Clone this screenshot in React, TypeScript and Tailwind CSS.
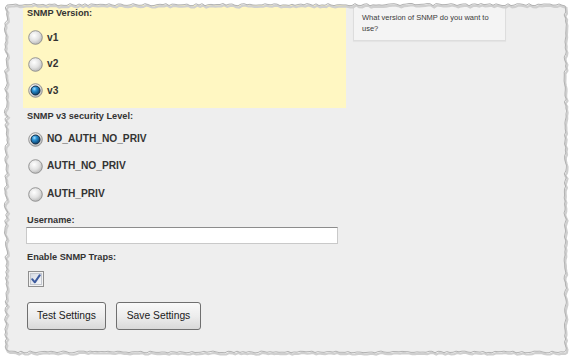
import React from "react";

// deterministic noise for the torn edge
function noise(i: number) {
  const s = Math.sin(i * 12.9898 + 78.233) * 43758.5453;
  return s - Math.floor(s);
}

function tornPath() {
  const pts: string[] = [];
  let k = 1;
  for (let x = 7; x <= 564; x += 3) pts.push(`${x},${(4.6 + (noise(k++) - 0.5) * 2.2).toFixed(1)}`);
  for (let y = 6; y <= 351; y += 3) pts.push(`${(564 + noise(k++) * 2.4).toFixed(1)},${y}`);
  for (let x = 564; x >= 7; x -= 3) pts.push(`${x},${(351 + noise(k++) * 1.8).toFixed(1)}`);
  for (let y = 350; y >= 6; y -= 3) pts.push(`${(6 + (noise(k++) - 0.5) * 3.4).toFixed(1)},${y}`);
  return "M" + pts.join(" L") + " Z";
}

function TornEdge() {
  const d = tornPath();
  return (
    <svg className="pointer-events-none absolute inset-0" width={576} height={364}>
      <path d={`M0 0H576V364H0Z ${d}`} fill="#ffffff" fillRule="evenodd" />
      <path d={d} fill="none" stroke="#cfcfcf" strokeWidth={2.2} transform="translate(1.2 1.8)" />
      <path d={d} fill="none" stroke="#b2b2b2" strokeWidth={1} />
    </svg>
  );
}

function Radio({ checked }: { checked?: boolean }) {
  return (
    <svg width={15} height={15} viewBox="0 0 15 15" className="shrink-0">
      <defs>
        <radialGradient id="radioBg" cx="40%" cy="35%" r="70%">
          <stop offset="0%" stopColor="#ffffff" />
          <stop offset="55%" stopColor="#e2e2e2" />
          <stop offset="100%" stopColor="#b4b4b4" />
        </radialGradient>
        <radialGradient id="radioDot" cx="38%" cy="32%" r="70%">
          <stop offset="0%" stopColor="#a9e2ff" />
          <stop offset="35%" stopColor="#2a93d6" />
          <stop offset="100%" stopColor="#0b3c66" />
        </radialGradient>
      </defs>
      <circle cx={7.5} cy={7.5} r={6.8} fill="url(#radioBg)" stroke="#8c8c8c" strokeWidth={0.9} />
      {checked ? <circle cx={7.5} cy={7.5} r={4.5} fill="url(#radioDot)" stroke="#142c44" strokeWidth={1} /> : null}
    </svg>
  );
}

function RadioRow({ label, checked, h }: { label: string; checked?: boolean; h: string }) {
  return (
    <div className={`flex items-center gap-[4px] pl-[5px] ${h}`}>
      <Radio checked={checked} />
      <span className="text-[10.2px] font-bold leading-none text-[#333]">{label}</span>
    </div>
  );
}

function Checkbox() {
  return (
    <svg width={16} height={16} viewBox="0 0 16 16">
      <defs>
        <linearGradient id="cbBg" x1="0" y1="0" x2="1" y2="1">
          <stop offset="0%" stopColor="#d4d9e2" />
          <stop offset="100%" stopColor="#f7f8fa" />
        </linearGradient>
      </defs>
      <rect x={0.5} y={0.5} width={15} height={15} fill="#f2f2f2" stroke="#8e8e8e" />
      <rect x={2.5} y={2.5} width={11} height={11} fill="url(#cbBg)" stroke="#c3c7cf" />
      <path d="M4.2 8.2 L6.8 11.3 L11.8 4.2" fill="none" stroke="#3c5a9e" strokeWidth={2} strokeLinecap="round" strokeLinejoin="round" />
    </svg>
  );
}

function FormButton({ label, w }: { label: string; w: string }) {
  return (
    <button className={`h-[28px] ${w} rounded-[3px] border border-[#6f6f6f] bg-gradient-to-b from-[#f9f9f9] via-[#ededed] to-[#d9d9d9] text-[10.3px] leading-none text-[#1a1a1a]`}>
      {label}
    </button>
  );
}

function Heading({ children }: { children: React.ReactNode }) {
  return <div className="h-[11px] pl-[4px] text-[9.2px] font-bold leading-[11px] text-[#333]">{children}</div>;
}

export default function App() {
  return (
    <div className="relative h-[364px] w-[576px] overflow-hidden bg-white font-['Liberation_Sans',Arial,sans-serif]">
      <div className="ml-[7px] mt-[5px] flex h-[347px] w-[558px] gap-[7px] bg-[#eeeeee] pl-[16px]">
        <div className="flex w-[323px] flex-col">
          <div className="h-[103px] bg-[#fff7c2] pt-[3px]">
            <Heading>SNMP Version:</Heading>
            <div className="mt-[5.5px]">
              <RadioRow label="v1" h="h-[26.5px]" />
              <RadioRow label="v2" h="h-[26.5px]" />
              <RadioRow label="v3" h="h-[26.5px]" checked />
            </div>
          </div>
          <div className="mt-[3px]">
            <Heading>SNMP v3 security Level:</Heading>
          </div>
          <div className="mt-[3.25px]">
            <RadioRow label="NO_AUTH_NO_PRIV" h="h-[27.5px]" checked />
            <RadioRow label="AUTH_NO_PRIV" h="h-[27.5px]" />
            <RadioRow label="AUTH_PRIV" h="h-[27.5px]" />
          </div>
          <div className="mt-[6.75px]">
            <Heading>Username:</Heading>
          </div>
          <input className="ml-[3px] mt-[1.5px] h-[17px] w-[312px] border border-[#c9c9c9] border-t-[#8c8c8c] bg-white px-1 text-[10px] outline-none" />
          <div className="mt-[7.5px]">
            <Heading>Enable SNMP Traps:</Heading>
          </div>
          <div className="ml-[5px] mt-[8.5px] h-[16px]">
            <Checkbox />
          </div>
          <div className="ml-[4px] mt-[15px] flex gap-[10px]">
            <FormButton label="Test Settings" w="w-[79px]" />
            <FormButton label="Save Settings" w="w-[85px]" />
          </div>
        </div>
        <div className="h-[36px] w-[153px] border border-[#dddddd] bg-[#f4f4f4] pl-[8px] pt-[7px] text-[7.5px] leading-[10.5px] text-[#3a3a3a] shadow-[0_1px_1px_rgba(0,0,0,0.04)]">
          What version of SNMP do you want to
          <br />
          use?
        </div>
      </div>
      <TornEdge />
    </div>
  );
}
